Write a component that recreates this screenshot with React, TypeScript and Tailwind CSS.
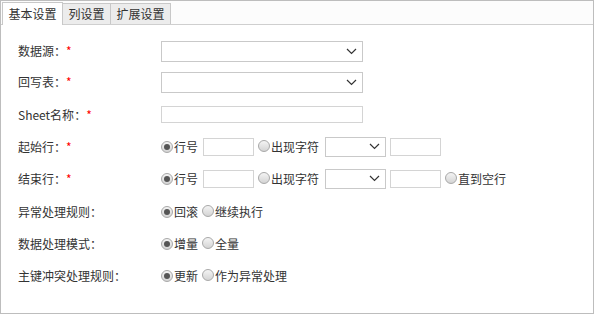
import type { ReactNode } from 'react'

const font = { fontFamily: '"Microsoft YaHei", "Noto Sans CJK SC", "Noto Sans", sans-serif' }

function Radio({ checked }: { readonly checked?: boolean }) {
  return (
    <span className="inline-flex h-[12px] w-[12px] shrink-0 items-center justify-center rounded-full border border-[#a8a8a8] bg-gradient-to-b from-[#f4f4f4] to-[#d4d4d4]">
      {checked && <span className="h-[6px] w-[6px] rounded-full bg-[#555]" />}
    </span>
  )
}

function Chevron() {
  return (
    <svg width="11" height="7" viewBox="0 0 11 7" fill="none" stroke="#333" strokeWidth="1.2">
      <path d="M1 1l4.5 4.5L10 1" />
    </svg>
  )
}

function Select({ w, h = 'h-[21px]' }: { readonly w: string; readonly h?: string }) {
  return (
    <div className={`flex ${w} ${h} items-center justify-end border border-[#c9c9c9] bg-white pr-[5px]`}>
      <Chevron />
    </div>
  )
}

function Box({ w }: { readonly w: string }) {
  return <div className={`${w} h-[18px] border border-[#d4d4d4] bg-white`} />
}

function Row({ label, req, h, children }: {
  readonly label: string; readonly req?: boolean; readonly h: string; readonly children: ReactNode
}) {
  return (
    <div className={`flex ${h} items-center`}>
      <div className="w-[160px] shrink-0 pl-[17px]">
        {label}：{req && <span className="text-[#ff0000]">*</span>}
      </div>
      <div className="flex items-center">{children}</div>
    </div>
  )
}

export default function App() {
  return (
    <div className="h-[314px] w-[594px] overflow-hidden border border-[#bdbdbd] bg-white text-[12px] text-[#333]" style={font}>
      {/* tabs */}
      <div className="flex h-[24px] items-end border-b border-[#cfcfcf] bg-[#fcfcfc] pl-[1px]">
        <div className="-mb-px flex h-[23px] w-[61px] items-center justify-center border border-b-0 border-[#c8c8c8] bg-white">基本设置</div>
        <div className="flex h-[21px] w-[48px] items-center justify-center border border-b-0 border-l-0 border-[#c8c8c8] bg-[#ececec]">列设置</div>
        <div className="flex h-[21px] w-[60px] items-center justify-center border border-b-0 border-l-0 border-[#c8c8c8] bg-[#ececec]">扩展设置</div>
      </div>

      <div className="pt-[11px]">
        <Row label="数据源" req h="h-[30px]">
          <Select w="w-[202px]" />
        </Row>
        <Row label="回写表" req h="h-[32px]">
          <Select w="w-[202px]" />
        </Row>
        <Row label="Sheet名称" req h="h-[33px]">
          <div className="h-[17px] w-[202px] border border-[#d4d4d4] bg-white" />
        </Row>
        <Row label="起始行" req h="h-[31px]">
          <Radio checked />
          <span className="ml-[1px]">行号</span>
          <div className="ml-[5px]"><Box w="w-[51px]" /></div>
          <div className="ml-[4px]"><Radio /></div>
          <span className="ml-[1px]">出现字符</span>
          <div className="ml-[6px]"><Select w="w-[61px]" h="h-[20px]" /></div>
          <div className="ml-[4px]"><Box w="w-[51px]" /></div>
        </Row>
        <Row label="结束行" req h="h-[33px]">
          <Radio checked />
          <span className="ml-[1px]">行号</span>
          <div className="ml-[5px]"><Box w="w-[51px]" /></div>
          <div className="ml-[4px]"><Radio /></div>
          <span className="ml-[1px]">出现字符</span>
          <div className="ml-[6px]"><Select w="w-[61px]" h="h-[20px]" /></div>
          <div className="ml-[4px]"><Box w="w-[51px]" /></div>
          <div className="ml-[4px]"><Radio /></div>
          <span className="ml-[1px]">直到空行</span>
        </Row>
        <Row label="异常处理规则" h="h-[33px]">
          <Radio checked />
          <span className="ml-[1px]">回滚</span>
          <div className="ml-[4px]"><Radio /></div>
          <span className="ml-[1px]">继续执行</span>
        </Row>
        <Row label="数据处理模式" h="h-[32px]">
          <Radio checked />
          <span className="ml-[1px]">增量</span>
          <div className="ml-[4px]"><Radio /></div>
          <span className="ml-[1px]">全量</span>
        </Row>
        <Row label="主键冲突处理规则" h="h-[32px]">
          <Radio checked />
          <span className="ml-[1px]">更新</span>
          <div className="ml-[4px]"><Radio /></div>
          <span className="ml-[1px]">作为异常处理</span>
        </Row>
      </div>
    </div>
  )
}
